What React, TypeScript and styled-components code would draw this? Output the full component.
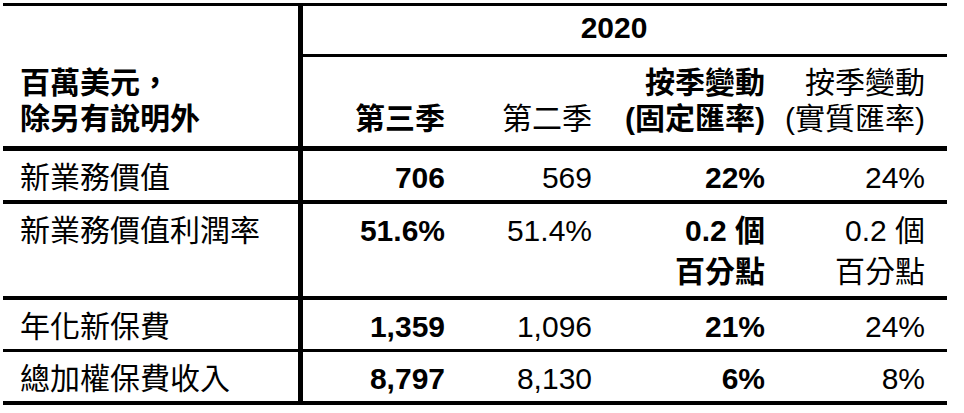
import * as React from "react";
import styled, { createGlobalStyle } from "styled-components";

const GlobalStyle = createGlobalStyle`
  html, body {
    margin: 0;
    padding: 0;
    background: #ffffff;
  }
  body {
    font-family: "Liberation Sans", Arial, "Noto Sans CJK TC", sans-serif;
    color: #000000;
  }
`;

const Page = styled.div`
  padding: 3px;
`;

const Table = styled.div`
  display: grid;
  grid-template-columns: 300px 164px 147px 173px 160px;
  grid-template-rows: 51px 94px 53px 96px 52px 53px;
  width: 944px;
  border-top: 3px solid #000;
  font-size: 30px;
`;

const Cell = styled.div<{ $line: number; $bold?: boolean }>`
  box-sizing: border-box;
  display: flex;
  flex-direction: column;
  align-items: flex-end;
  justify-content: flex-start;
  padding: 6px 22px 0 0;
  border-bottom: ${(p) => p.$line}px solid #000;
  font-weight: ${(p) => (p.$bold ? 700 : 400)};
  line-height: 41px;
  white-space: nowrap;
`;

const LabelCell = styled(Cell)`
  align-items: flex-start;
  padding: 6px 0 0 17px;
  border-right: 5px solid #000;
`;

const HeadCell = styled(Cell)`
  justify-content: flex-end;
  padding: 0 22px 9px 0;
  line-height: 36px;
`;

const CornerCell = styled(HeadCell)`
  grid-row: span 2;
  align-items: flex-start;
  padding: 0 0 9px 17px;
  border-right: 5px solid #000;
`;

const YearCell = styled(Cell)`
  grid-column: span 4;
  align-items: center;
  justify-content: center;
  padding: 0 22px 4px 0;
  line-height: 36px;
`;

type Row = {
  label: string;
  cells: string[][];
  line: number;
};

const rows: Row[] = [
  { label: "新業務價值", cells: [["706"], ["569"], ["22%"], ["24%"]], line: 4 },
  {
    label: "新業務價值利潤率",
    cells: [["51.6%"], ["51.4%"], ["0.2 個", "百分點"], ["0.2 個", "百分點"]],
    line: 4,
  },
  { label: "年化新保費", cells: [["1,359"], ["1,096"], ["21%"], ["24%"]], line: 3 },
  { label: "總加權保費收入", cells: [["8,797"], ["8,130"], ["6%"], ["8%"]], line: 4 },
];

const boldColumns = [true, false, true, false];

const headers: string[][] = [["第三季"], ["第二季"], ["按季變動", "(固定匯率)"], ["按季變動", "(實質匯率)"]];

export default function App() {
  return (
    <>
      <GlobalStyle />
      <Page>
        <Table>
          <CornerCell $line={5} $bold>
            <span>百萬美元，</span>
            <span>除另有說明外</span>
          </CornerCell>
          <YearCell $line={3} $bold>
            2020
          </YearCell>
          {headers.map((lines, i) => (
            <HeadCell key={i} $line={5} $bold={boldColumns[i]}>
              {lines.map((t) => (
                <span key={t}>{t}</span>
              ))}
            </HeadCell>
          ))}
          {rows.map((row) => (
            <React.Fragment key={row.label}>
              <LabelCell $line={row.line}>{row.label}</LabelCell>
              {row.cells.map((lines, i) => (
                <Cell key={i} $line={row.line} $bold={boldColumns[i]}>
                  {lines.map((t) => (
                    <span key={t}>{t}</span>
                  ))}
                </Cell>
              ))}
            </React.Fragment>
          ))}
        </Table>
      </Page>
    </>
  );
}
